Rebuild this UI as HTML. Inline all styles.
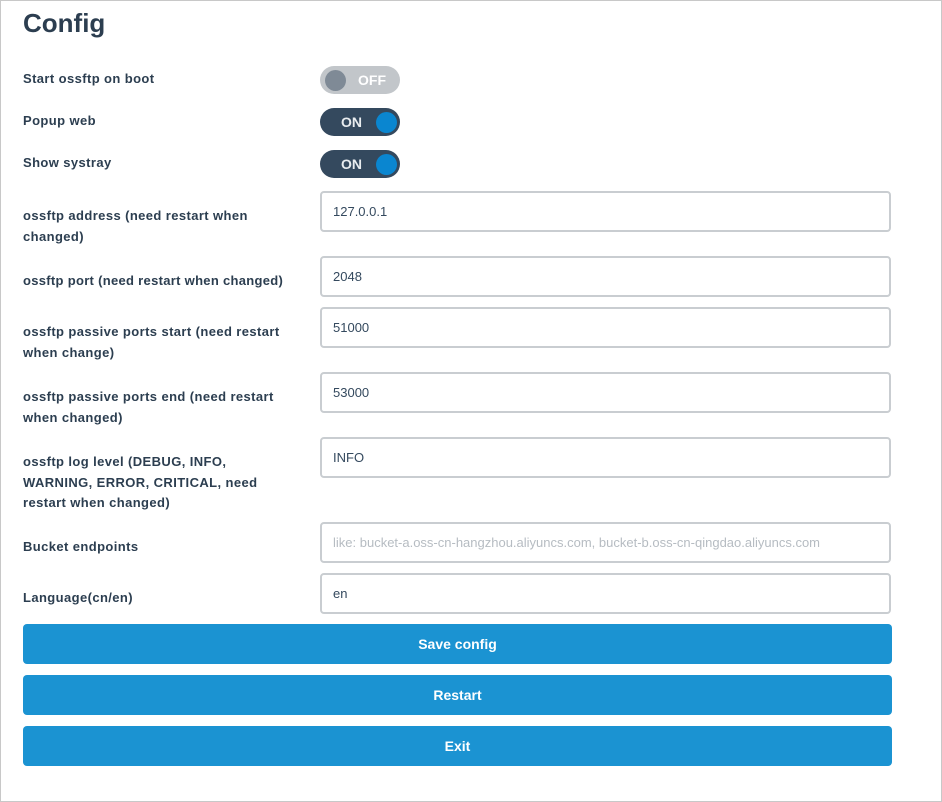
<!DOCTYPE html>
<html><head><style>
body{margin:0;width:942px;height:802px;font-family:"Liberation Sans",sans-serif;color:#2c3e50;background:#fff}
.frame{position:absolute;left:0;top:0;width:940px;height:800px;border:1px solid #c8c8c8}
h1{position:absolute;left:23px;top:8px;margin:0;font-size:26px;font-weight:bold;color:#2c3e50}
.lbl{position:absolute;left:23px;width:262px;font-size:13px;font-weight:bold;line-height:20.5px;color:#2c3e50;letter-spacing:0.4px}
.tg{position:absolute;left:320px;width:80px;height:28px;border-radius:14px;font-size:14px;font-weight:bold;color:#fff}
.tg .k{position:absolute;top:4px;width:21px;height:21px;border-radius:50%}
.off{background:#c2c6ca}.off .k{left:5px;background:#7f8a96}.off span{position:absolute;left:38px;top:6px}
.on{background:#34495e}.on .k{right:3px;background:#0a86d0}.on span{position:absolute;left:21px;top:6px;color:#e8ecef}
.in{position:absolute;left:320px;border:2px solid #c9cdd1;border-radius:4px;font-size:13px;line-height:37px;padding-left:11px;box-sizing:border-box;width:571px;height:41px;color:#34495e}
.ph{color:#b6bcc2}
.btn{position:absolute;left:23px;width:869px;height:40px;background:#1b93d2;border-radius:4px;color:#fff;font-weight:bold;font-size:14px;text-align:center;line-height:40px}
</style></head><body>
<div class="frame"></div>
<h1>Config</h1>
<div class="lbl" style="top:69px">Start ossftp on boot</div>
<div class="tg off" style="top:66px"><div class="k"></div><span>OFF</span></div>
<div class="lbl" style="top:111px">Popup web</div>
<div class="tg on" style="top:108px"><div class="k"></div><span>ON</span></div>
<div class="lbl" style="top:153px">Show systray</div>
<div class="tg on" style="top:150px"><div class="k"></div><span>ON</span></div>
<div class="lbl" style="top:206px">ossftp address (need restart when changed)</div>
<div class="in" style="top:191px">127.0.0.1</div>
<div class="lbl" style="top:271px;white-space:nowrap;letter-spacing:0.3px">ossftp port (need restart when changed)</div>
<div class="in" style="top:256px">2048</div>
<div class="lbl" style="top:322px">ossftp passive ports start (need restart when change)</div>
<div class="in" style="top:307px">51000</div>
<div class="lbl" style="top:387px">ossftp passive ports end (need restart when changed)</div>
<div class="in" style="top:372px">53000</div>
<div class="lbl" style="top:452px">ossftp log level (DEBUG, INFO, WARNING, ERROR, CRITICAL, need restart when changed)</div>
<div class="in" style="top:437px">INFO</div>
<div class="lbl" style="top:537px">Bucket endpoints</div>
<div class="in ph" style="top:522px">like: bucket-a.oss-cn-hangzhou.aliyuncs.com, bucket-b.oss-cn-qingdao.aliyuncs.com</div>
<div class="lbl" style="top:588px">Language(cn/en)</div>
<div class="in" style="top:573px">en</div>
<div class="btn" style="top:624px">Save config</div>
<div class="btn" style="top:675px">Restart</div>
<div class="btn" style="top:726px">Exit</div>
</body></html>
